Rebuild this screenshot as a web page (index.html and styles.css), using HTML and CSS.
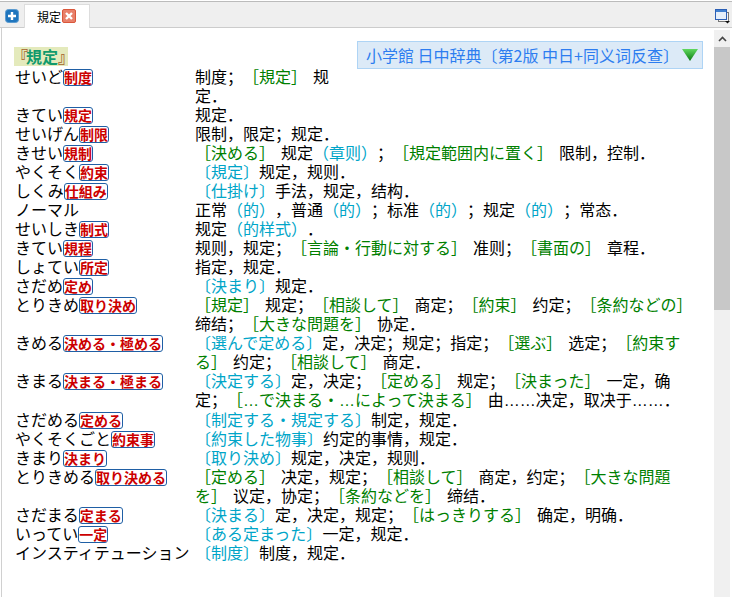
FILE: index.html
```html
<!DOCTYPE html>
<html lang="zh">
<head>
<meta charset="utf-8">
<title>規定</title>
<link rel="stylesheet" href="styles.css">
</head>
<body>
<div class="app">
  <div class="tabbar">
    <svg class="ico-plus" viewBox="0 0 14 14"><rect x="0.5" y="0.5" width="13" height="13" rx="3" fill="#1f75bd" stroke="#5b9bd0"/><path d="M7 3v8M3 7h8" stroke="#fff" stroke-width="2.4"/></svg>
    <div class="tab">
      <span class="tab-label">規定</span>
      <svg class="ico-close" viewBox="0 0 14 14"><rect x="0.5" y="0.5" width="13" height="13" rx="1.5" fill="#e8806a" stroke="#d9573b"/><path d="M4 4l6 6M10 4l-6 6" stroke="#fff" stroke-width="2.4"/></svg>
    </div>
    <svg class="ico-win" viewBox="0 0 15 15"><rect x="3.5" y="3.5" width="10" height="9" fill="#f4f4f4" stroke="#777"/><rect x="0.5" y="0.5" width="11" height="10" fill="#e4eefa" stroke="#2b5fb5"/><rect x="1" y="1" width="10" height="2" fill="#3f7fd0"/><path d="M10 12h5l-2.500 2.500z" fill="#111"/></svg>
  </div>
  <div class="main">
    <div class="content">
      <div class="head">
        <span class="title"><span class="tb">『</span>規定<span class="tb tb-end">』</span></span>
        <div class="dict">
          <span class="dict-name">小学館 日中辞典〔第2版 中日+同义词反查〕</span>
          <svg class="ico-tri" viewBox="0 0 16 12"><defs><linearGradient id="tg" x1="0" y1="0" x2="0" y2="1"><stop offset="0" stop-color="#5fd85f"/><stop offset="1" stop-color="#0b7a12"/></linearGradient></defs><path d="M0 0h16L8 12z" fill="url(#tg)"/></svg>
        </div>
      </div>
      <div class="list">
        <div class="w">せいど<b>制度</b></div><div class="d">制度；<i>［規定］</i>规<br>定．</div>
        <div class="w">きてい<b>規定</b></div><div class="d">规定．</div>
        <div class="w">せいげん<b>制限</b></div><div class="d">限制，限定；规定．</div>
        <div class="w">きせい<b>規制</b></div><div class="d"><i>［決める］</i>规定<u>（章则）</u>；<i>［規定範囲内に置く］</i>限制，控制．</div>
        <div class="w">やくそく<b>約束</b></div><div class="d"><u class="j">〔規定〕</u>规定，规则．</div>
        <div class="w">しくみ<b>仕組み</b></div><div class="d"><u class="j">〔仕掛け〕</u>手法，规定，结构．</div>
        <div class="w">ノーマル</div><div class="d">正常<u>（的）</u>，普通<u>（的）</u>；标准<u>（的）</u>；规定<u>（的）</u>；常态．</div>
        <div class="w">せいしき<b>制式</b></div><div class="d">规定<u>（的样式）</u>．</div>
        <div class="w">きてい<b>規程</b></div><div class="d">规则，规定；<i>［言論・行動に対する］</i>准则；<i>［書面の］</i>章程．</div>
        <div class="w">しょてい<b>所定</b></div><div class="d">指定，规定．</div>
        <div class="w">さだめ<b>定め</b></div><div class="d"><u class="j">〔決まり〕</u>规定．</div>
        <div class="w">とりきめ<b>取り決め</b></div><div class="d"><i>［規定］</i>规定；<i>［相談して］</i>商定；<i>［約束］</i>约定；<i>［条約などの］</i><br>缔结；<i>［大きな問題を］</i>协定．</div>
        <div class="w">きめる<b>決める・極める</b></div><div class="d"><u class="j">〔選んで定める〕</u>定，决定；规定；指定；<i>［選ぶ］</i>选定；<i>［約束す<br>る］</i>约定；<i>［相談して］</i>商定．</div>
        <div class="w">きまる<b>決まる・極まる</b></div><div class="d"><u class="j">〔決定する〕</u>定，决定；<i>［定める］</i>规定；<i>［決まった］</i>一定，确<br>定；<i>［<span class="e">…</span>で決まる・<span class="e">…</span>によって決まる］</i>由<span class="e">……</span>决定，取决于<span class="e">……</span>．</div>
        <div class="w">さだめる<b>定める</b></div><div class="d"><u class="j">〔制定する・規定する〕</u>制定，规定．</div>
        <div class="w">やくそくごと<b>約束事</b></div><div class="d"><u class="j">〔約束した物事〕</u>约定的事情，规定．</div>
        <div class="w">きまり<b>決まり</b></div><div class="d"><u class="j">〔取り決め〕</u>规定，决定，规则．</div>
        <div class="w">とりきめる<b>取り決める</b></div><div class="d"><i>［定める］</i>决定，规定；<i>［相談して］</i>商定，约定；<i>［大きな問題<br>を］</i>议定，协定；<i>［条約などを］</i>缔结．</div>
        <div class="w">さだまる<b>定まる</b></div><div class="d"><u class="j">〔決まる〕</u>定，决定，规定；<i>［はっきりする］</i>确定，明确．</div>
        <div class="w">いってい<b>一定</b></div><div class="d"><u class="j">〔ある定まった〕</u>一定，规定．</div>
        <div class="w">インスティテューション</div><div class="d"><u class="j">〔制度〕</u>制度，规定．</div>
      </div>
    </div>
    <div class="scroll">
      <div class="sc-up"><svg class="ico-up" viewBox="0 0 9 6"><path d="M1 5l3.500-3.500L8 5" fill="none" stroke="#444" stroke-width="1.600"/></svg></div>
      <div class="sc-thumb"></div>
    </div>
  </div>
</div>
</body>
</html>
```

FILE: styles.css
```css
* { box-sizing: border-box; }
html, body { margin: 0; padding: 0; background: #fff; }
body { font-family: "Noto Sans CJK SC", "Noto Sans CJK JP", sans-serif; font-size: 16px; color: #000; text-spacing-trim: space-all; }
.app { width: 732px; height: 597px; display: flex; flex-direction: column; overflow: hidden; }

.tabbar { height: 27px; margin-top: 1px; flex: none; display: flex; align-items: flex-end; background: #efefef; border-top: 1px solid #bbb; border-bottom: 1px solid #ccc; position: relative; padding-left: 5px; padding-right: 2px; }
.ico-plus { width: 14px; height: 14px; align-self: flex-start; margin-top: 7px; flex: none; }
.tab { width: 66px; height: 24px; margin-left: 5px; margin-bottom: -1px; background: #fff; border: 1px solid #ddd; border-bottom: 0; display: flex; align-items: flex-start; padding-left: 12px; }
.tab-label { font-family: "Noto Sans CJK JP", sans-serif; font-size: 12px; line-height: 18px; margin-top: 3px; width: 25px; }
.ico-close { width: 14px; height: 14px; margin-top: 4px; flex: none; }
.ico-win { width: 15px; height: 15px; margin-left: auto; align-self: flex-start; margin-top: 7px; flex: none; }

.main { flex: 1; min-height: 0; display: flex; padding-right: 2px; }
.content { flex: 1; min-width: 0; border-left: 1px solid #d0d0d0; margin-left: 1px; padding: 13px 11px 0 13px; }
.head { height: 27px; display: flex; justify-content: space-between; align-items: flex-start; }
.title { margin-top: 6px; margin-left: -1px; height: 19px; line-height: 18px; width: 54px; padding-left: 6px; background: #e4eabc; color: #119a6c; font-weight: 700; font-family: "Noto Sans CJK JP", sans-serif; white-space: nowrap; }
.tb { color: #a5622a; margin: 0 -2px 0 -8px; }
.tb-end { margin: 0; }
.dict { width: 346px; height: 28px; display: flex; align-items: center; padding-left: 8px; background: #dceaf7; border: 1px solid #aed4f5; }
.dict-name { color: #2d7df0; line-height: 26px; white-space: nowrap; width: 316px; font-family: "Noto Sans CJK SC", sans-serif; }
.ico-tri { width: 16px; height: 12px; flex: none; }

.list { display: grid; grid-template-columns: 180px 1fr; line-height: 19px; margin-top: -1px; }
.w { font-family: "Noto Sans CJK JP", sans-serif; white-space: nowrap; }
.d { white-space: nowrap; }
.w b { display: inline-block; vertical-align: top; height: 17px; margin-top: 2px; line-height: 15px; font-size: 14px; font-weight: 700; color: #cc0000; background: #fff; border: 1px solid #1f5fa5; border-radius: 3px; }
.d i { font-style: normal; color: #007f00; font-family: "Noto Sans CJK JP", sans-serif; margin-right: 6px; }
.d u { text-decoration: none; color: #00a5c8; }
.d u.j { font-family: "Noto Sans CJK JP", sans-serif; }
.e { font-family: "Liberation Sans", sans-serif; }

.scroll { width: 16px; flex: none; margin-top: 2px; background: #f0f0f0; display: flex; flex-direction: column; }
.sc-up { height: 17px; display: flex; align-items: center; justify-content: center; }
.ico-up { width: 9px; height: 6px; }
.sc-thumb { height: 263px; background: #c8c8c8; }
```
